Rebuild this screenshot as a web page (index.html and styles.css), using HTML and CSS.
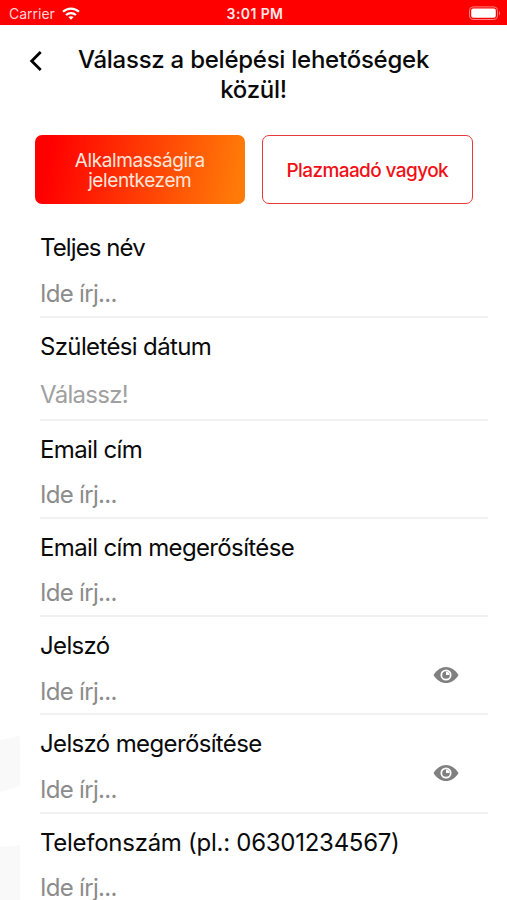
FILE: index.html
```
<!DOCTYPE html>
<html lang="hu">
<head>
    <meta charset="UTF-8">
    <meta name="viewport" content="width=device-width, initial-scale=1.0">
    <title>Regisztráció</title>
    <link rel="stylesheet" href="styles.css">
</head>
<body>

    <div class="screen">
        <!-- Faint background shapes -->
        <svg class="background-shapes" width="20" height="164" viewBox="0 0 20 164">
            <path d="M0 4 L20 0 V50 L0 56 Z M0 111 L20 109 V164 H0 Z" fill="#f9f9f9"/>
        </svg>

        <div class="status-bar">
            <div class="status-left">
                <span class="carrier">Carrier</span>
                <svg class="wifi" width="18" height="13" viewBox="0 0 18 13" fill="none" stroke="#fff" stroke-width="2.2">
                    <path d="M1 4.8 C5.5 0.5 12.5 0.5 17 4.8"/>
                    <path d="M4 8 C6.8 5.4 11.2 5.4 14 8"/>
                    <path d="M6.4 10.1 C7.9 8.8 10.1 8.8 11.6 10.1 L9 12.8 Z" fill="#fff" stroke="none"/>
                </svg>
            </div>
            <span class="time">3:01 PM</span>
            <svg class="battery" width="32" height="15" viewBox="0 0 32 15">
                <rect x="0.5" y="0.9" width="28" height="12.6" rx="3.6" fill="none" stroke="#ff8080"/>
                <rect x="2.2" y="2.5" width="24.6" height="9.3" rx="2" fill="#fff"/>
                <path d="M30 5 Q32 7.2 30 9.4 Z" fill="#ff9090"/>
            </svg>
        </div>

        <div class="header">
            <svg class="back" width="14" height="22" viewBox="0 0 14 22">
                <path d="M11.7 2 L2.7 11 L11.7 20" fill="none" stroke="#000" stroke-width="2.8"/>
            </svg>
            <h1>Válassz a belépési lehetőségek<br>közül!</h1>
        </div>

        <div class="button-container">
            <button class="btn-filled">Alkalmasságira<br>jelentkezem</button>
            <button class="btn-outline">Plazmaadó vagyok</button>
        </div>

        <form class="form">
            <div class="field">
                <label for="name" class="label-tight">Teljes név</label>
                <input type="text" id="name" placeholder="Ide írj...">
            </div>
            <div class="field field-date">
                <label for="birth">Születési dátum</label>
                <input type="text" id="birth" placeholder="Válassz!">
            </div>
            <div class="field">
                <label for="email">Email cím</label>
                <input type="text" id="email" placeholder="Ide írj...">
            </div>
            <div class="field">
                <label for="email2">Email cím megerősítése</label>
                <input type="text" id="email2" placeholder="Ide írj...">
            </div>
            <div class="field">
                <label for="password">Jelszó</label>
                <input type="password" id="password" placeholder="Ide írj...">
                <svg class="eye" width="26" height="18" viewBox="0 0 26 18">
                    <path d="M0.5 9 C7 -1.8 19 -1.8 25.5 9 C19 19.8 7 19.8 0.5 9 Z" fill="#808080"/>
                    <circle cx="13" cy="9" r="4.7" fill="#808080" stroke="#fff" stroke-width="1.7"/>
                    <path d="M13 9 V5.4 A3.6 3.6 0 0 1 16.6 9 Z" fill="#fff"/>
                </svg>
            </div>
            <div class="field">
                <label for="password2">Jelszó megerősítése</label>
                <input type="password" id="password2" placeholder="Ide írj...">
                <svg class="eye" width="26" height="18" viewBox="0 0 26 18">
                    <path d="M0.5 9 C7 -1.8 19 -1.8 25.5 9 C19 19.8 7 19.8 0.5 9 Z" fill="#808080"/>
                    <circle cx="13" cy="9" r="4.7" fill="#808080" stroke="#fff" stroke-width="1.7"/>
                    <path d="M13 9 V5.4 A3.6 3.6 0 0 1 16.6 9 Z" fill="#fff"/>
                </svg>
            </div>
            <div class="field">
                <label for="phone" class="label-wide">Telefonszám (pl.: 06301234567)</label>
                <input type="text" id="phone" placeholder="Ide írj...">
            </div>
        </form>
    </div>

</body>
</html>
```

FILE: styles.css
```
* {
    box-sizing: border-box;
}

body {
    font-family: Inter, "Liberation Sans", sans-serif;
    margin: 0;
    height: 900px;
    overflow: hidden;
    background-color: #fff;
    color: #0a0a0a;
}

.screen {
    position: relative;
    height: 900px;
    overflow: hidden;
}

.background-shapes {
    position: absolute;
    left: 0;
    top: 736px;
}

.status-bar {
    display: grid;
    grid-template-columns: 1fr auto 1fr;
    align-items: center;
    height: 25px;
    padding: 2px 6px 0 9px;
    background-color: #ff0000;
    color: #fff;
    font-size: 14px;
}

.status-left {
    display: flex;
    align-items: center;
    gap: 7px;
}

.carrier {
    color: #ffd5d5;
}

.time {
    color: #ffe8e8;
    font-weight: 600;
    letter-spacing: 0.4px;
}

.battery {
    justify-self: end;
}

.header {
    display: flex;
    align-items: flex-start;
    height: 110px;
    padding: 20px 30px 0 29px;
}

.back {
    margin-top: 5px;
}

h1 {
    flex: 1;
    margin: 0 13px 0 0;
    font-size: 24px;
    font-weight: 500;
    line-height: 30px;
    letter-spacing: -0.25px;
    text-align: center;
}

.button-container {
    display: flex;
    gap: 17px;
    padding: 0 34px 0 35px;
}

.button-container button {
    flex: 1;
    height: 69px;
    padding: 2px 0 0;
    border: none;
    border-radius: 7px;
    font-family: inherit;
    font-size: 19px;
    line-height: 20px;
    letter-spacing: -0.4px;
}

.button-container .btn-filled {
    background: linear-gradient(100deg, #ff0000 8%, #ff7a08 95%);
    color: #ffe6dc;
}

.button-container .btn-outline {
    background-color: #fff;
    border: 1.5px solid #e8383c;
    color: #f01015;
    font-weight: 500;
    letter-spacing: -0.6px;
}

.form {
    padding: 15px 19px 0 40px;
}

.field {
    position: relative;
    display: flex;
    flex-direction: column;
    height: 98.2px;
    padding-top: 14px;
    border-bottom: 2px solid #f1f1f1;
}

/* first row carries the extra pixel under the buttons */
.field:first-child {
    height: 99px;
}

.field label {
    font-size: 24px;
    line-height: 30px;
    letter-spacing: -0.64px;
}

.field .label-tight {
    letter-spacing: -0.9px;
}

.field .label-wide {
    letter-spacing: -0.27px;
}

.field input {
    width: 100%;
    height: 30px;
    margin-top: 15px;
    padding: 0;
    border: none;
    outline: none;
    background: transparent;
    font-family: inherit;
    font-size: 24px;
    letter-spacing: -0.7px;
}

.field input::placeholder {
    color: #8c8c8c;
    opacity: 1;
}

.field-date {
    height: 102.8px;
}

.field-date input {
    margin-top: 17px;
}

.field-date input::placeholder {
    color: #a0a0a0;
}

.eye {
    position: absolute;
    right: 29.5px;
    top: 48.5px;
}
```
